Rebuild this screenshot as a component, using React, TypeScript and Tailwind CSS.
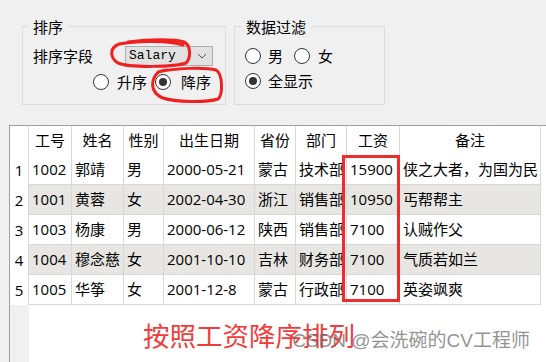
import React from "react";

const Radio = ({ checked }: { checked?: boolean }) => (
  <span className="w-[16px] h-[16px] rounded-full border border-[#333333] bg-white flex items-center justify-center shrink-0">
    {checked && <span className="w-[8px] h-[8px] rounded-full bg-[#333333]" />}
  </span>
);

const cols = [
  { w: "w-[43px]", h: "工号" },
  { w: "w-[52px]", h: "姓名" },
  { w: "w-[40px]", h: "性别" },
  { w: "w-[91px]", h: "出生日期" },
  { w: "w-[41px]", h: "省份" },
  { w: "w-[51px]", h: "部门" },
  { w: "w-[53px]", h: "工资" },
  { w: "w-[141px]", h: "备注" },
];

const rows = [
  ["1002", "郭靖", "男", "2000-05-21", "蒙古", "技术部", "15900", "侠之大者，为国为民"],
  ["1001", "黄蓉", "女", "2002-04-30", "浙江", "销售部", "10950", "丐帮帮主"],
  ["1003", "杨康", "男", "2000-06-12", "陕西", "销售部", "7100", "认贼作父"],
  ["1004", "穆念慈", "女", "2001-10-10", "吉林", "财务部", "7100", "气质若如兰"],
  ["1005", "华筝", "女", "2001-12-8", "蒙古", "行政部", "7100", "英姿飒爽"],
];

export default function App() {
  return (
    <div className="w-[546px] h-[362px] bg-[#f0f0f0] relative overflow-hidden text-black font-['Open_Sans','Noto_Sans_CJK_SC',sans-serif] text-[15px]">
      {/* Top group boxes */}
      <div className="flex pl-[22px] pt-[26px] gap-[8px]">
        <div className="relative w-[204px] h-[79px] border border-[#dcdcdc]">
          <span className="absolute left-[4px] top-[-9px] px-[6px] bg-[#f0f0f0] leading-[18px]">排序</span>
          <div className="flex items-center pl-[10px] mt-[19px] h-[20px]">
            <span className="w-[92px] leading-[20px]">排序字段</span>
            <div className="w-[88px] h-[20px] border border-[#adadad] bg-[#e1e1e1] flex items-center pl-[3px]">
              <span className="font-['Liberation_Mono',monospace] text-[13px] leading-[18px] flex-1">Salary</span>
              <svg width="10" height="6" viewBox="0 0 10 6" className="mr-[5px]">
                <path d="M1 1 L5 5 L9 1" fill="none" stroke="#555" strokeWidth="1" />
              </svg>
            </div>
          </div>
          <div className="flex items-center pl-[70px] mt-[8px] h-[16px]">
            <Radio />
            <span className="ml-[8px] leading-[16px]">升序</span>
            <span className="ml-[8px]"><Radio checked /></span>
            <span className="ml-[10px] leading-[16px]">降序</span>
          </div>
        </div>
        <div className="relative w-[151px] h-[79px] border border-[#dcdcdc]">
          <span className="absolute left-[6px] top-[-9px] px-[5px] bg-[#f0f0f0] leading-[18px]">数据过滤</span>
          <div className="flex items-center pl-[10px] mt-[21px] h-[16px]">
            <Radio />
            <span className="ml-[7px] leading-[16px]">男</span>
            <span className="ml-[11px]"><Radio /></span>
            <span className="ml-[8px] leading-[16px]">女</span>
          </div>
          <div className="flex items-center pl-[10px] mt-[9px] h-[16px]">
            <Radio checked />
            <span className="ml-[7px] leading-[16px]">全显示</span>
          </div>
        </div>
      </div>

      {/* Table */}
      <div className="ml-[9px] mt-[20px] w-[540px] h-[240px] border-l border-t border-[#a0a0a0] bg-white flex flex-col">
        <div className="flex h-[29px]">
          <div className="w-[19px] border-r border-[#d8d8d8]" />
          {cols.map((c) => (
            <div key={c.h} className={`${c.w} border-r border-[#d8d8d8] flex items-center justify-center whitespace-nowrap`}>
              {c.h}
            </div>
          ))}
        </div>
        {rows.map((r, i) => (
          <div key={i} className="flex h-[30px]">
            <div className="w-[19px] border-r border-[#d8d8d8] flex items-center justify-center">{i + 1}</div>
            {r.map((v, j) => (
              <div
                key={j}
                className={`${cols[j].w} ${i % 2 === 1 ? "bg-[#e7e6e3]" : "bg-white"} border-r border-b border-[#d8d8d8] flex items-center pl-[3px] whitespace-nowrap overflow-hidden`}
              >
                {v}
              </div>
            ))}
          </div>
        ))}
        <div className="flex flex-1">
          <div className="w-[19px] bg-[#f0f0f0]" />
          <div className="flex-1 pl-[114px] pt-[14px]">
            <span className="text-[#f23c3c] text-[26.5px] leading-[32px] font-['Noto_Sans_CJK_SC',sans-serif]">按照工资降序排列</span>
          </div>
        </div>
      </div>

      {/* Annotations */}
      <div className="absolute left-[342px] top-[155px] w-[58px] h-[147px] border-[3px] border-[#ee2c2c]" />
      <svg className="absolute left-0 top-0 pointer-events-none" width="546" height="362">
        <path
          d="M128 42 C150 39, 175 39, 184 42 C191 45, 191 58, 186 63 C175 67, 130 68, 118 63 C110 58, 109 48, 119 44 C140 40, 170 41, 183 45"
          fill="none"
          stroke="#f02020"
          strokeWidth="3"
          strokeLinecap="round"
        />
        <path
          d="M158 72 C175 68, 205 67, 216 70 C223 74, 223 95, 218 99 C205 103, 175 102, 163 98 C153 94, 150 85, 155 76 C157 72, 162 70, 168 70"
          fill="none"
          stroke="#f02020"
          strokeWidth="3"
          strokeLinecap="round"
        />
      </svg>
      <div className="absolute right-[16px] top-[328px] text-[19px] leading-[26px] text-[rgba(110,110,110,0.75)] font-['Liberation_Sans','Noto_Sans_CJK_SC',sans-serif] whitespace-nowrap">
        CSDN @会洗碗的CV工程师
      </div>
    </div>
  );
}
